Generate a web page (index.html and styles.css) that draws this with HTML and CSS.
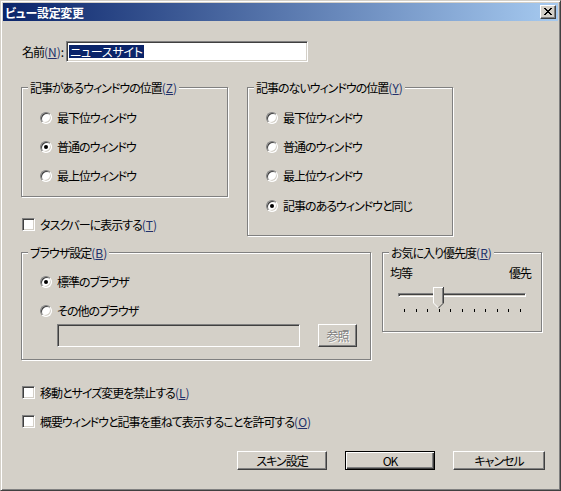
FILE: index.html
```html
<!DOCTYPE html>
<html lang="ja">
<head>
<meta charset="utf-8">
<title>ビュー設定変更</title>
<link rel="stylesheet" href="styles.css">
</head>
<body>
<div class="window">
  <div class="titlebar">
    <span class="title">ビュー設定変更</span>
    <span class="close">
      <svg width="8" height="7" viewBox="0 0 8 7" shape-rendering="crispEdges"><path d="M0 0h2v1h-2zM6 0h2v1h-2zM1 1h2v1h-2zM5 1h2v1h-2zM2 2h4v1h-4zM3 3h2v1h-2zM2 4h4v1h-4zM1 5h2v1h-2zM5 5h2v1h-2zM0 6h2v1h-2zM6 6h2v1h-2z" fill="#000"/></svg>
    </span>
  </div>
  <div class="content">
    <div class="name-row">
      <span class="name-label">名前<span class="mn">(<u>N</u>)</span>:</span>
      <div class="textbox"><span class="sel">ニュースサイト</span></div>
    </div>

    <div class="row1">
      <div class="col-left">
        <div class="group g1">
          <span class="legend">記事があるウィンドウの位置<span class="mn">(<u>Z</u>)</span></span>
          <div class="radio-list">
            <div class="radio"><span class="rb"></span><span>最下位ウィンドウ</span></div>
            <div class="radio"><span class="rb on"></span><span>普通のウィンドウ</span></div>
            <div class="radio"><span class="rb"></span><span>最上位ウィンドウ</span></div>
          </div>
        </div>
        <div class="check cb-task"><span class="cb"></span><span>タスクバーに表示する<span class="mn">(<u>T</u>)</span></span></div>
      </div>
      <div class="group g2">
        <span class="legend">記事のないウィンドウの位置<span class="mn">(<u>Y</u>)</span></span>
        <div class="radio-list">
          <div class="radio"><span class="rb"></span><span>最下位ウィンドウ</span></div>
          <div class="radio"><span class="rb"></span><span>普通のウィンドウ</span></div>
          <div class="radio"><span class="rb"></span><span>最上位ウィンドウ</span></div>
          <div class="radio last"><span class="rb on"></span><span>記事のあるウィンドウと同じ</span></div>
        </div>
      </div>
    </div>

    <div class="row2">
      <div class="group g3">
        <span class="legend">ブラウザ設定<span class="mn">(<u>B</u>)</span></span>
        <div class="radio-list">
          <div class="radio"><span class="rb on"></span><span>標準のブラウザ</span></div>
          <div class="radio"><span class="rb"></span><span>その他のブラウザ</span></div>
        </div>
        <div class="browse-row">
          <div class="textbox disabled"></div>
          <div class="btn btn-disabled">参照</div>
        </div>
      </div>
      <div class="group g4">
        <span class="legend">お気に入り優先度<span class="mn">(<u>R</u>)</span></span>
        <div class="slider-labels"><span>均等</span><span>優先</span></div>
        <div class="slider">
          <div class="track"></div>
          <svg class="thumb" width="11" height="21" viewBox="0 0 11 21" shape-rendering="crispEdges">
            <path d="M0 0H11V16L5.5 21.5L0 16Z" fill="#D4D0C8"/>
            <path d="M0.5 16V0.5H10" fill="none" stroke="#fff"/>
            <path d="M10.5 0V16" fill="none" stroke="#404040"/>
            <path d="M9.5 1V16" fill="none" stroke="#808080"/>
            <path d="M0.5 16L5.5 21" fill="none" stroke="#fff" shape-rendering="auto"/>
            <path d="M10.5 16L5.5 21" fill="none" stroke="#404040" shape-rendering="auto"/>
          </svg>
          <div class="ticks">
            <i></i><i></i><i></i><i></i><i></i><i></i><i></i><i></i><i></i><i></i><i></i>
          </div>
        </div>
      </div>
    </div>

    <div class="checks">
      <div class="check"><span class="cb"></span><span>移動とサイズ変更を禁止する<span class="mn">(<u>L</u>)</span></span></div>
      <div class="check"><span class="cb"></span><span>概要ウィンドウと記事を重ねて表示することを許可する<span class="mn">(<u>O</u>)</span></span></div>
    </div>

    <div class="buttons">
      <div class="btn">スキン設定</div>
      <div class="btn btn-default">OK</div>
      <div class="btn btn-wide">キャンセル</div>
    </div>
  </div>
</div>
</body>
</html>
```

FILE: styles.css
```css
* { box-sizing: border-box; }
html, body { margin: 0; padding: 0; }
body {
  width: 561px;
  height: 491px;
  background: #D4D0C8;
  font-family: "Noto Sans CJK JP", "Noto Sans", sans-serif;
  font-size: 12px;
  line-height: 13px;
  color: #000;
  font-feature-settings: "palt";
  letter-spacing: -1px;
}
.window {
  width: 561px;
  height: 491px;
  border: 1px solid;
  border-color: #D4D0C8 #404040 #404040 #D4D0C8;
  box-shadow: inset 1px 1px 0 #fff, inset -1px -1px 0 #808080;
  padding: 2px;
  background: #D4D0C8;
}
.titlebar {
  height: 18px;
  display: flex;
  align-items: center;
  justify-content: space-between;
  background: linear-gradient(to right, #0A246A, #A6CAF0);
  padding: 0 2px;
}
.title { color: #fff; font-weight: bold; letter-spacing: -0.3px; }
.close {
  width: 16px;
  height: 14px;
  background: #D4D0C8;
  border: 1px solid;
  border-color: #fff #404040 #404040 #fff;
  box-shadow: inset -1px -1px 0 #808080;
  display: flex;
  align-items: center;
  justify-content: center;
  padding: 0 1px 1px 0;
}
.close svg { display: block; }

.content { padding: 20px 13px 0 18px; }
.mn { color: #22306a; letter-spacing: 0; }
.mn u { text-decoration-thickness: 1px; text-underline-offset: 1px; }

.name-row { display: flex; align-items: center; height: 21px; }
.name-label { width: 45px; padding-left: 1px; white-space: nowrap; }
.textbox {
  width: 242px;
  height: 21px;
  background: #fff;
  border: 1px solid;
  border-color: #808080 #fff #fff #808080;
  box-shadow: inset 1px 1px 0 #404040, inset -1px -1px 0 #D4D0C8;
  padding: 3px 0 0 2px;
}
.sel {
  display: inline-block;
  background: #0A246A;
  color: #fff;
  padding: 0 1px;
  height: 13px;
  letter-spacing: -0.2px;
}

.row1 { display: flex; margin-top: 25px; align-items: flex-start; }
.col-left { display: flex; flex-direction: column; }

.group {
  position: relative;
  border: 1px solid #808080;
  box-shadow: inset 1px 1px 0 #fff, 1px 1px 0 #fff;
}
.legend {
  position: absolute;
  top: -7px;
  left: 6px;
  padding: 0 2px;
  background: #D4D0C8;
  white-space: nowrap;
}
.g1 { width: 207px; height: 110px; }
.g2 { width: 206px; height: 149px; margin-left: 19px; }

.radio-list {
  display: flex;
  flex-direction: column;
  gap: 16px;
  padding: 23px 0 0 18px;
}
.radio { display: flex; align-items: center; gap: 5px; height: 13px; white-space: nowrap; }
.radio.last { margin-top: 1px; }
.rb {
  position: relative;
  width: 12px;
  height: 12px;
  border-radius: 50%;
  background: #fff;
  border: 1px solid;
  border-color: #808080 #fff #fff #808080;
  box-shadow: inset 1px 1px 0 #404040, inset -1px -1px 0 #D4D0C8;
  flex: none;
}
.rb.on::after {
  content: "";
  position: absolute;
  left: 3px;
  top: 3px;
  width: 4px;
  height: 4px;
  border-radius: 50%;
  background: #000;
}

.check { display: flex; align-items: center; gap: 5px; height: 13px; padding-left: 1px; white-space: nowrap; }
.cb {
  width: 13px;
  height: 13px;
  background: #fff;
  border: 1px solid;
  border-color: #808080 #fff #fff #808080;
  box-shadow: inset 1px 1px 0 #404040, inset -1px -1px 0 #D4D0C8;
  flex: none;
}
.cb-task { margin-top: 21px; }

.row2 { display: flex; margin-top: 16px; align-items: flex-start; }
.g3 { width: 350px; height: 108px; }
.g3 .radio-list { padding-top: 22px; }
.g4 { width: 160px; height: 80px; margin-left: 11px; }

.browse-row { display: flex; margin: 7px 0 0 35px; align-items: flex-start; }
.textbox.disabled { width: 243px; height: 23px; background: #D4D0C8; }
.browse-row .btn { width: 39px; height: 23px; margin-left: 18px; }

.btn {
  display: flex;
  align-items: center;
  justify-content: center;
  width: 90px;
  height: 19px;
  background: #D4D0C8;
  border: 1px solid;
  border-color: #fff #404040 #404040 #fff;
  box-shadow: inset -1px -1px 0 #808080;
  white-space: nowrap;
}
.btn-wide { width: 92px; }
.btn-default {
  border-color: #000;
  box-shadow: inset 1px 1px 0 #fff, inset -1px -1px 0 #404040, inset -2px -2px 0 #808080;
}
.btn-disabled { color: #808080; text-shadow: 1px 1px 0 #fff; }

.slider-labels {
  display: flex;
  justify-content: space-between;
  padding: 13px 10px 0 7px;
  height: 26px;
}
.slider { position: relative; margin: 14px 0 0 15px; width: 128px; }
.track {
  height: 4px;
  border: 1px solid;
  border-color: #808080 #fff #fff #808080;
  box-shadow: inset 1px 1px 0 #404040;
}
.thumb { position: absolute; left: 35px; top: -6px; }
.ticks {
  display: flex;
  justify-content: space-between;
  width: 117px;
  margin: 12px 0 0 6px;
}
.ticks i { display: block; width: 1px; height: 3px; background: #000; }

.checks { display: flex; flex-direction: column; gap: 16px; margin-top: 26px; }

.buttons { display: flex; justify-content: flex-end; gap: 18px; margin-top: 23px; }
```
